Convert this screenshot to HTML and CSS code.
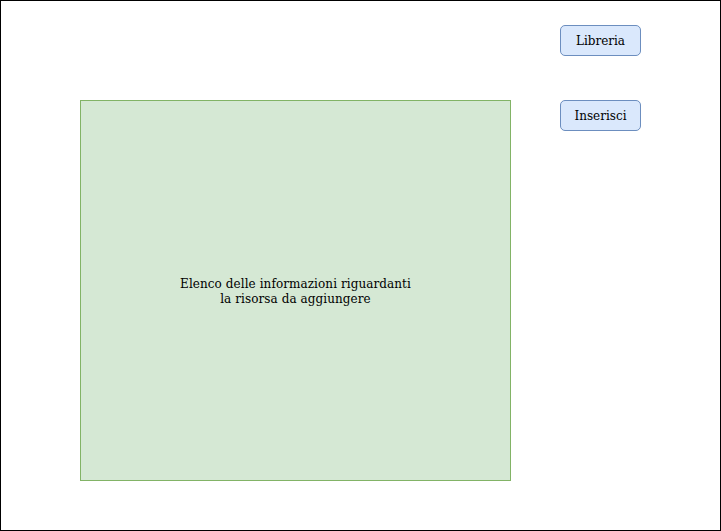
FILE: index.html
```html
<!DOCTYPE html>
<html>
<head>
<meta charset="utf-8">
<link rel="stylesheet" href="styles.css">
</head>
<body>
<div class="frame">
  <div class="panel">
    <p class="panel-text">Elenco delle informazioni riguardanti<br>la risorsa da aggiungere</p>
  </div>
  <div class="actions">
    <div class="btn">Libreria</div>
    <div class="btn">Inserisci</div>
  </div>
</div>
</body>
</html>
```

FILE: styles.css
```css
html, body {
  margin: 0;
  padding: 0;
  background: #ffffff;
}
.frame {
  box-sizing: border-box;
  width: 721px;
  height: 531px;
  border: 1px solid #000000;
  display: flex;
  align-items: flex-start;
  padding: 24px 0 0 79px;
  font-family: "DejaVu Serif", serif;
  font-size: 12px;
  color: #000000;
}
.panel {
  box-sizing: border-box;
  width: 431px;
  height: 381px;
  margin-top: 75px;
  background: #d5e8d4;
  border: 1px solid #82b366;
  display: flex;
  align-items: center;
  justify-content: center;
}
.panel-text {
  margin: 0;
  padding-top: 3px;
  text-align: center;
  line-height: 15px;
  letter-spacing: 0.08px;
}
.actions {
  margin-left: 49px;
  display: flex;
  flex-direction: column;
  gap: 44px;
}
.btn {
  box-sizing: border-box;
  width: 81px;
  height: 31px;
  padding-top: 1px;
  background: #dae8fc;
  border: 1px solid #6c8ebf;
  border-radius: 5px;
  display: flex;
  align-items: center;
  justify-content: center;
}
```
